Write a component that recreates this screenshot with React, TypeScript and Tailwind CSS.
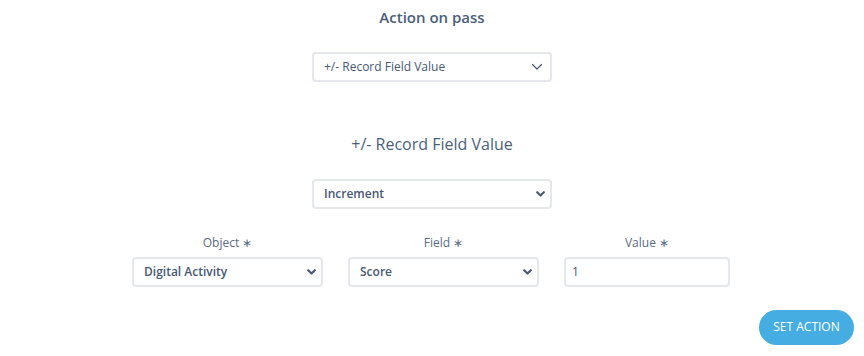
import { useState } from 'react';

const font = { fontFamily: '"Open Sans", "Noto Sans", Arial, sans-serif' };

function Chevron({ bold }: { bold?: boolean }) {
  if (bold) {
    return (
      <svg
        width="9"
        height="6"
        viewBox="0 0 9 6"
        className="pointer-events-none absolute right-[7px] top-1/2 -translate-y-1/2"
      >
        <path
          d="M1.2 1.2 L4.5 4.5 L7.8 1.2"
          fill="none"
          stroke="#4a5a75"
          strokeWidth={2.2}
          strokeLinecap="round"
          strokeLinejoin="round"
        />
      </svg>
    );
  }
  return (
    <svg
      width="12"
      height="8"
      viewBox="0 0 12 8"
      className="pointer-events-none absolute right-[9px] top-1/2 -translate-y-1/2"
    >
      <path
        d="M1.5 1.5 L6 6 L10.5 1.5"
        fill="none"
        stroke="#4a5a75"
        strokeWidth={1.2}
        strokeLinecap="round"
        strokeLinejoin="round"
      />
    </svg>
  );
}

function SelectBox({
  value,
  width,
  thinChevron,
}: {
  value: string;
  width: string;
  thinChevron?: boolean;
}) {
  return (
    <div className={`relative h-[30px] ${width}`}>
      <select
        defaultValue={value}
        className={`h-full w-full appearance-none rounded-[4px] border-2 border-[#e4e7ec] bg-white pl-[10px] text-[12px] text-[#475873] outline-none ${
          thinChevron ? 'font-medium' : 'font-semibold'
        }`}
      >
        <option>{value}</option>
      </select>
      <Chevron bold={!thinChevron} />
    </div>
  );
}

function Label({ text }: { text: string }) {
  return (
    <div className="mb-[5px] text-center text-[12px] text-[#5a6b83]">
      {text} <span>∗</span>
    </div>
  );
}

export default function App() {
  const [val, setVal] = useState('1');

  return (
    <div className="relative h-[356px] w-[864px] bg-white" style={font}>
      <div className="flex flex-col items-center pt-[6px]">
        <h2 className="text-[15px] font-semibold text-[#4b5e79]">Action on pass</h2>

        <div className="mt-[23px]">
          <SelectBox value="+/- Record Field Value" width="w-[240px]" thinChevron />
        </div>

        <h3 className="mt-[50px] text-[16px] text-[#4b5f7c]">+/- Record Field Value</h3>

        <div className="mt-[23px]">
          <SelectBox value="Increment" width="w-[240px]" />
        </div>
      </div>

      <div className="mt-[25px] flex items-end pl-[132px]">
        <div className="w-[191px]">
          <Label text="Object" />
          <SelectBox value="Digital Activity" width="w-[191px]" />
        </div>
        <div className="ml-[25px] w-[191px]">
          <Label text="Field" />
          <SelectBox value="Score" width="w-[191px]" />
        </div>
        <div className="ml-[25px] w-[166px]">
          <Label text="Value" />
          <input
            value={val}
            onChange={(e) => setVal(e.target.value)}
            className="h-[30px] w-full rounded-[4px] border-2 border-[#e4e7ec] bg-white pl-[6px] text-[12px] text-[#475873] outline-none"
          />
        </div>
      </div>

      <div className="mt-[23px] flex justify-end pr-[10px]">
        <button className="h-[35px] w-[95px] rounded-full bg-[#46ade3] text-[12px] text-white">
          SET ACTION
        </button>
      </div>
    </div>
  );
}
